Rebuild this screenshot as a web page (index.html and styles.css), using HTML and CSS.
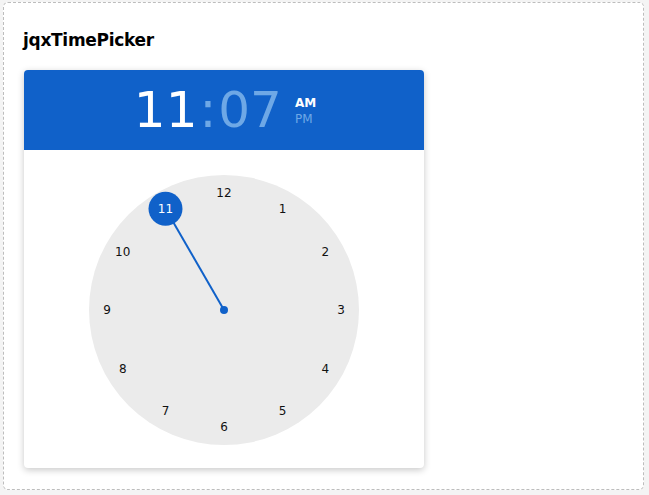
FILE: index.html
```html
<!DOCTYPE html>
<html lang="en">
<head>
    <meta charset="UTF-8">
    <title>jqxTimePicker</title>
    <link rel="stylesheet" href="styles.css">
</head>
<body>
    <div class="demo">
        <h1 class="demo-title">jqxTimePicker</h1>
        <div class="picker">
            <div class="picker-header">
                <div class="time">
                    <span class="hour">11</span><span class="sep">:</span><span class="minute">07</span>
                </div>
                <div class="ampm">
                    <span class="am">AM</span>
                    <span class="pm">PM</span>
                </div>
            </div>
            <div class="picker-body">
                <svg class="dial" width="270" height="270" viewBox="0 0 270 270">
                    <circle cx="135" cy="135" r="135" fill="#ebebeb"/>
                    <line x1="135" y1="135" x2="76.5" y2="33.7" stroke="#1061c9" stroke-width="2"/>
                    <circle cx="135" cy="135" r="4" fill="#1061c9"/>
                    <circle cx="76.5" cy="33.7" r="17" fill="#1061c9"/>
                    <g class="nums">
                        <text x="135" y="18">12</text>
                        <text x="193.5" y="33.7">1</text>
                        <text x="236.3" y="76.5">2</text>
                        <text x="252" y="135">3</text>
                        <text x="236.3" y="193.5">4</text>
                        <text x="193.5" y="236.3">5</text>
                        <text x="135" y="252">6</text>
                        <text x="76.5" y="236.3">7</text>
                        <text x="33.7" y="193.5">8</text>
                        <text x="18" y="135">9</text>
                        <text x="33.7" y="76.5">10</text>
                        <text class="on" x="76.5" y="33.7">11</text>
                    </g>
                </svg>
            </div>
        </div>
    </div>
</body>
</html>
```

FILE: styles.css
```css
*{
    box-sizing: border-box;
}
html{
    background: #f4f4f4;
}
body{
    margin: 0;
    padding: 2px 5px 5px 3px;
    font-family: "DejaVu Sans", Verdana, sans-serif;
}
.demo{
    height: 488px;
    background: #fff;
    border: 1px dashed #bdbdbd;
    border-radius: 5px;
    padding: 27px 20px 25px 19px;
}
.demo-title{
    margin: 0 0 20px 0;
    font-size: 17px;
    line-height: 20px;
    font-weight: bold;
    color: #000;
    letter-spacing: -0.3px;
}
.picker{
    width: 400px;
    margin-left: 1px;
    background: #fff;
    border-radius: 4px;
    box-shadow: 0 2px 7px rgba(0,0,0,0.22);
    overflow: hidden;
}
.picker-header{
    height: 80px;
    background: #1061c9;
    display: flex;
    align-items: center;
    justify-content: center;
    gap: 13px;
    padding-left: 2px;
}
.time{
    font-size: 50px;
    line-height: 1;
}
.hour{
    color: #fff;
}
.sep,
.minute{
    color: #6ea8e6;
}
.sep{
    padding: 0 2px;
}
.ampm{
    display: flex;
    flex-direction: column;
    font-size: 12px;
    line-height: 16px;
    margin-top: 2px;
}
.am{
    color: #fff;
    font-weight: bold;
}
.pm{
    color: #6ea8e6;
}
.picker-body{
    padding: 25px 0 23px 0;
    display: flex;
    justify-content: center;
}
.dial{
    display: block;
}
.nums text{
    font-family: "DejaVu Sans", Verdana, sans-serif;
    font-size: 12px;
    fill: #111;
    text-anchor: middle;
    dominant-baseline: central;
}
.nums text.on{
    fill: #fff;
}
```
